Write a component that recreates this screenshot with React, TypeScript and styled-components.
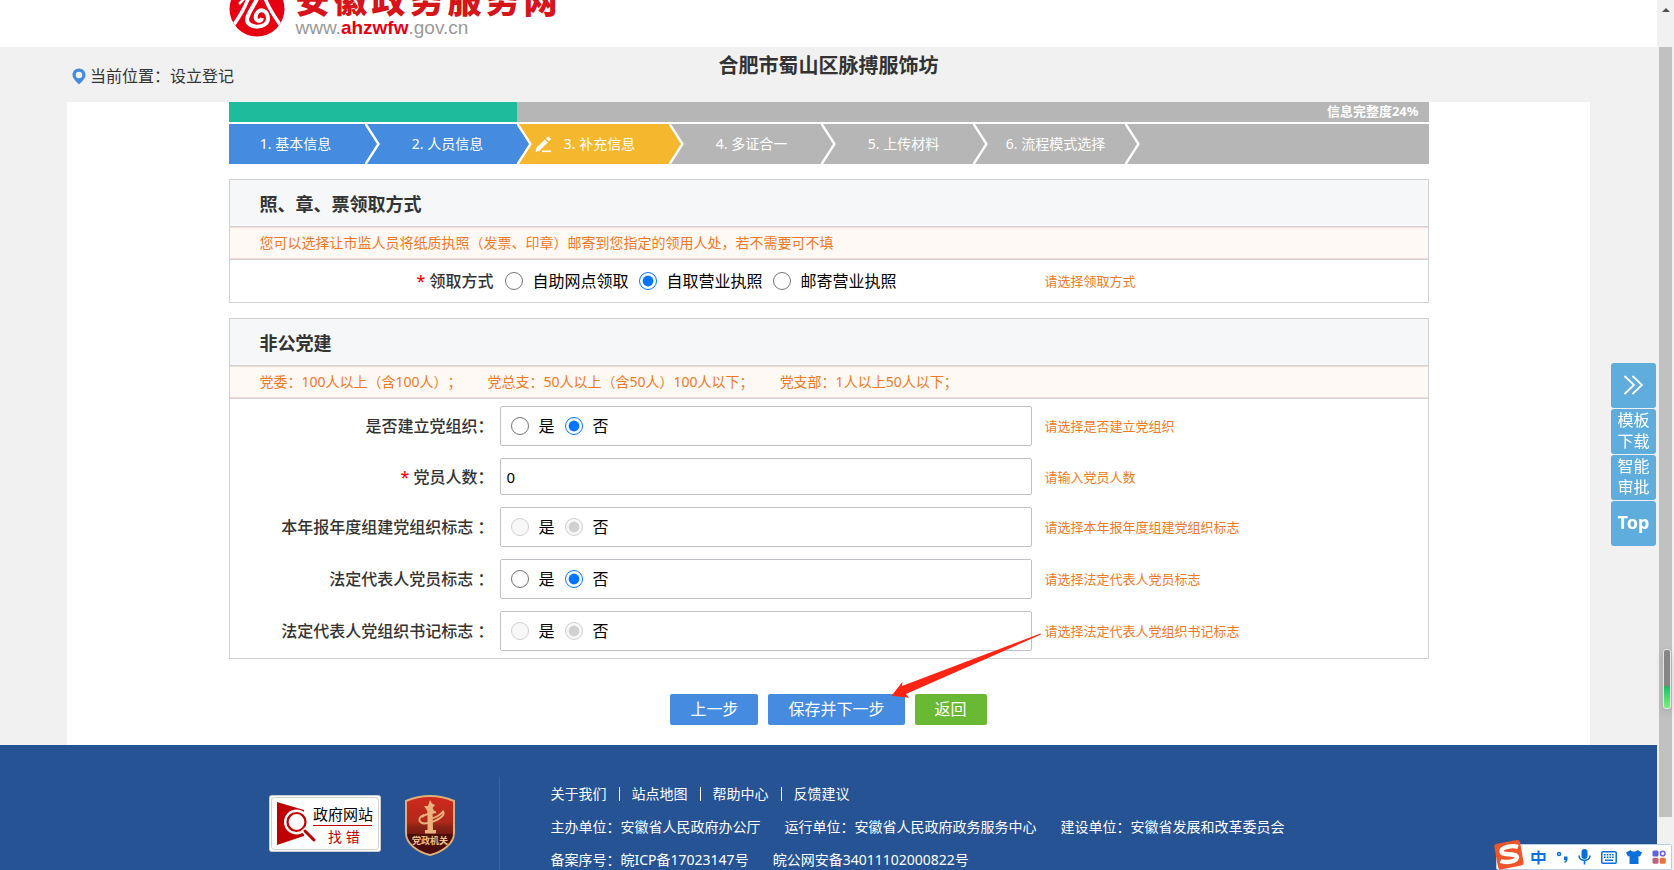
import React, { useState } from "react";
import styled, { createGlobalStyle } from "styled-components";

const GlobalStyle = createGlobalStyle`
  * { box-sizing: border-box; }
  html, body { margin: 0; padding: 0; }
  body {
    background: #f1f1f1;
    color: #333;
    font-family: "Noto Sans", "Noto Sans CJK SC", sans-serif;
    font-size: 14px;
    line-height: 20px;
    text-spacing-trim: space-all;
  }
  button, input { font-family: inherit; }
  a { color: inherit; text-decoration: none; }
  h1, h2, p { margin: 0; }
`;

const colors = {
  blue: "#458bdf",
  grey: "#b6b6b6",
  yellow: "#f5b72e",
  teal: "#1cbc9c",
  green: "#69b934",
  line: "#d0d1d2",
  orange: "#f17923",
  footer: "#265394",
};

const Viewport = styled.div`
  display: flex;
  height: 100vh;
  overflow: hidden;
`;

const Page = styled.div`
  flex: 1;
  min-width: 0;
  display: flex;
  flex-direction: column;
`;

/* ---------- header ---------- */

const Header = styled.header`
  flex: none;
  height: 47px;
  background: #fff;
  overflow: hidden;
  display: flex;
  justify-content: center;
`;

const HeaderInner = styled.div`
  width: 1200px;
  display: flex;
  align-items: flex-end;
  gap: 11px;
`;

const Emblem = styled.svg`
  flex: none;
  width: 56px;
  height: 56px;
  margin-bottom: 10px;
`;

const SiteNames = styled.div`
  display: flex;
  flex-direction: column;
  margin-bottom: 9px;
`;

const SiteName = styled.div`
  display: flex;
  gap: 4px;
  font-size: 34px;
  line-height: 36px;
  font-weight: 900;
  color: #d7141a;
`;

const SiteUrl = styled.div`
  font-family: "Liberation Sans", sans-serif;
  font-size: 19px;
  line-height: 20px;
  color: #999;
  strong { color: #e60012; }
`;

/* ---------- location bar ---------- */

const LocationBar = styled.div`
  flex: none;
  height: 55px;
  padding: 0 67px;
  display: grid;
  grid-template-columns: 1fr auto 1fr;
`;

const Crumb = styled.div`
  display: flex;
  align-items: center;
  gap: 4px;
  padding-left: 5px;
  font-size: 16px;
  line-height: 58px;
  svg { flex: none; }
`;

const Company = styled.h1`
  font-size: 20px;
  line-height: 37px;
  font-weight: 700;
`;

/* ---------- main panel ---------- */

const Panel = styled.main`
  flex: none;
  margin: 0 67px;
  background: #fff;
  display: flex;
  justify-content: center;
`;

const Content = styled.div`
  width: 1200px;
  display: flex;
  flex-direction: column;
`;

const Progress = styled.div`
  height: 20px;
  background: linear-gradient(to right, ${colors.teal} 24%, ${colors.grey} 24%);
  color: #fff;
  font-size: 13px;
  line-height: 18px;
  font-weight: 700;
  text-align: right;
  padding-right: 10px;
`;

const Steps = styled.ol`
  list-style: none;
  margin: 2px 0 15px;
  padding: 0;
  display: flex;
  height: 40px;
  background: ${colors.grey};
  color: #fff;
`;

const StepItem = styled.li`
  width: 152px;
  display: flex;
`;

const StepBody = styled.span<{ $fill: string }>`
  flex: 1;
  display: grid;
  grid-template-columns: 1fr auto 1fr;
  align-items: center;
  padding-right: 2px;
  background: ${(p) => p.$fill};
`;

const StepIcon = styled.span`
  display: flex;
  padding-left: 2px;
`;

const Section = styled.section`
  border: 1px solid ${colors.line};
  margin-bottom: 15px;
`;

const SectionTitle = styled.h2`
  height: 47px;
  padding-left: 30px;
  background: #f5f7f9;
  border-bottom: 1px solid ${colors.line};
  font-size: 18px;
  line-height: 48px;
  font-weight: 700;
`;

const Notice = styled.p`
  display: flex;
  gap: 26px;
  height: 32px;
  padding-left: 30px;
  background: #fff9f6;
  border: 1px solid #fbdbd5;
  border-width: 1px 0;
  line-height: 29px;
  color: ${colors.orange};
`;

const Rows = styled.div<{ $pad: number }>`
  border-top: 1px solid ${colors.line};
  padding: ${(p) => p.$pad}px 0;
  display: flex;
  flex-direction: column;
  gap: 12px;
`;

const Row = styled.div`
  display: grid;
  grid-template-columns: 264px 532px 1fr;
  align-items: center;
  min-height: 37px;
  column-gap: 6px;
`;

const FieldLabel = styled.label`
  text-align: right;
  font-size: 16px;
  line-height: 24px;
  font-weight: 500;
  white-space: pre;
`;

const Required = styled.span`
  color: #f00;
`;

const Hint = styled.span`
  padding-left: 7px;
  font-size: 13px;
  color: ${colors.orange};
`;

const RadioBox = styled.div<{ $boxed: boolean }>`
  display: flex;
  align-items: center;
  gap: 10px;
  height: ${(p) => (p.$boxed ? 40 : 42)}px;
  padding-left: ${(p) => (p.$boxed ? 10 : 5)}px;
  border: ${(p) => (p.$boxed ? "1px solid #bfc3c8" : "0")};
  border-radius: 2px;
`;

const RadioLabel = styled.label`
  display: flex;
  align-items: center;
  gap: 10px;
  font-size: 16px;
  line-height: 24px;
  color: #000;
`;

const Radio = styled.input`
  width: 18px;
  height: 18px;
  margin: 0;
`;

const TextInput = styled.input`
  width: 100%;
  height: 37px;
  padding: 0 6px;
  border: 1px solid #bfc3c8;
  border-radius: 2px;
  font-size: 15px;
  color: #000;
  background: #fff;
`;

const Actions = styled.div`
  display: flex;
  justify-content: center;
  gap: 10px;
  padding: 20px 0;
`;

const ActionButton = styled.button<{ $fill: string }>`
  height: 31px;
  padding: 0 20px;
  border: 0;
  border-radius: 2px;
  background: ${(p) => p.$fill};
  color: #fff;
  font-size: 16px;
  line-height: 31px;
`;

const ArrowAnchor = styled.div`
  position: relative;
`;

const Arrow = styled.svg`
  position: absolute;
  left: 123px;
  bottom: 26px;
  width: 150px;
  height: 66px;
  pointer-events: none;
`;

/* ---------- footer ---------- */

const Footer = styled.footer`
  flex: 1 0 auto;
  padding-top: 32px;
  background: ${colors.footer};
  color: #fff;
  display: flex;
  justify-content: center;
`;

const FooterInner = styled.div`
  width: 1200px;
  display: flex;
`;

const Badges = styled.div`
  width: 271px;
  padding: 18px 0 0 40px;
  display: flex;
  align-items: flex-start;
  gap: 24px;
  border-right: 1px solid #3a649f;
`;

const FooterText = styled.div`
  padding-left: 51px;
`;

const FooterLine = styled.div<{ $gap: number }>`
  display: flex;
  align-items: center;
  gap: ${(p) => p.$gap}px;
  line-height: 33px;
`;

const Divider = styled.i`
  width: 1px;
  height: 14px;
  background: #fff;
`;

/* ---------- overlays ---------- */

const Scrollbar = styled.div`
  flex: none;
  width: 17px;
  padding: 8px 2px 53px;
  background: #f1f1f1;
  display: flex;
  flex-direction: column;
  align-items: center;
  gap: 35px;
`;

const ScrollArrow = styled.i`
  border: 4px solid transparent;
  border-top: 0;
  border-bottom: 4px solid #505050;
`;

const ScrollThumb = styled.div`
  flex: 1;
  width: 100%;
  background: #c1c1c1;
`;

const Meter = styled.div`
  position: fixed;
  right: 3px;
  top: 649px;
  width: 8px;
  height: 60px;
  border: 1px solid #e4e4e4;
  border-radius: 3px;
  background: linear-gradient(#858585 62%, #22b45c 62%, #2ccb6c 70%, #7df07a);
  box-shadow: 0 3px 8px rgba(0, 0, 0, 0.15);
`;

const SideTools = styled.nav`
  position: fixed;
  right: 18px;
  top: 363px;
  display: flex;
  flex-direction: column;
  gap: 1px;
`;

const SideButton = styled.button<{ $strong?: boolean }>`
  width: 45px;
  height: 45px;
  padding: 0 6px 2px;
  border: 0;
  border-radius: 3px;
  background: #5eaddd;
  color: #fff;
  font-size: ${(p) => (p.$strong ? 18 : 16)}px;
  font-weight: ${(p) => (p.$strong ? 700 : 400)};
  line-height: 21px;
  display: flex;
  align-items: center;
  justify-content: center;
`;

const ImeBar = styled.div`
  position: fixed;
  right: 2px;
  bottom: 0;
  height: 26px;
  width: 176px;
  padding: 0 5px 0 34px;
  display: flex;
  align-items: center;
  justify-content: space-between;
  background: #fff;
  border: 1px solid #b7cdea;
  border-radius: 2px;
`;

const ImeLogo = styled.svg`
  position: absolute;
  left: -4px;
  bottom: -1px;
`;

/* ---------- data ---------- */

const steps = [
  { text: "1. 基本信息", fill: colors.blue },
  { text: "2. 人员信息", fill: colors.blue },
  { text: "3. 补充信息", fill: colors.yellow, current: true },
  { text: "4. 多证合一", fill: colors.grey },
  { text: "5. 上传材料", fill: colors.grey },
  { text: "6. 流程模式选择", fill: colors.grey },
];

function Chevron({ from, to }: { from: string; to: string }) {
  return (
    <svg width="16" height="40" viewBox="0 0 16 40">
      <rect width="16" height="40" fill={to} />
      <path d="M0 0L13 20L0 40Z" fill={from} />
      <path d="M0 -1L13.5 20L0 41" fill="none" stroke="#fff" strokeWidth="2.4" />
    </svg>
  );
}

interface RadioFieldProps {
  name: string;
  label: string;
  hint: string;
  options: string[];
  initial: number;
  boxed?: boolean;
  required?: boolean;
  disabled?: boolean;
}

function RadioField({ name, label, hint, options, initial, boxed = true, required, disabled }: RadioFieldProps) {
  const [value, setValue] = useState(initial);
  return (
    <Row>
      <FieldLabel as="span" id={`${name}-label`}>
        {required && <Required>* </Required>}
        {label}
      </FieldLabel>
      <RadioBox $boxed={boxed} role="radiogroup" aria-labelledby={`${name}-label`}>
        {options.map((o, i) => (
          <RadioLabel key={o}>
            <Radio type="radio" name={name} checked={value === i} disabled={disabled} onChange={() => setValue(i)} />
            {o}
          </RadioLabel>
        ))}
      </RadioBox>
      <Hint>{hint}</Hint>
    </Row>
  );
}

function FindErrorBadge() {
  return (
    <svg width="112" height="57" viewBox="0 0 112 57">
      <rect x="0.5" y="0.5" width="111" height="56" rx="2" fill="#fff" stroke="#c9cdd3" />
      <rect x="2.5" y="2.5" width="107" height="52" rx="3" fill="#fff" stroke="#cfcfcf" />
      <path d="M8 7L35 15V41L8 50Z" fill="#c00000" />
      <circle cx="27.500" cy="27" r="12.500" fill="#fff" />
      <circle cx="27.500" cy="27" r="9" fill="#fff" stroke="#c00000" strokeWidth="2.200" />
      <path d="M34 34L46 47" stroke="#fff" strokeWidth="6" />
      <path d="M36 36L45 45" stroke="#c00000" strokeWidth="3" strokeLinecap="round" />
      <text x="44" y="25" fontSize="15" fill="#000">政府网站</text>
      <path d="M44 30.500H103" stroke="#c00000" />
      <text x="59" y="47" fontSize="14" fill="#c00000">找 错</text>
    </svg>
  );
}

function PartyBadge() {
  return (
    <svg width="50" height="61" viewBox="0 0 50 61">
      <defs>
        <linearGradient id="shield" x1="0" y1="0" x2="0" y2="1">
          <stop offset="0" stopColor="#cf2a1c" />
          <stop offset="0.45" stopColor="#b0281b" />
          <stop offset="0.5" stopColor="#8f2417" />
          <stop offset="0.7" stopColor="#6d170f" />
          <stop offset="1" stopColor="#3f0b08" />
        </linearGradient>
      </defs>
      <path d="M25 1C33 1 42 3 49 6V38C49 49 37 57 25 60C13 57 1 49 1 38V6C8 3 17 1 25 1Z" fill="url(#shield)" stroke="#dfae78" strokeWidth="2" />
      <path d="M2.500 39V41C5 50 15 56 25 58.500C35 56 45 50 47.500 41V39Z" fill="#4a0d09" />
      <path d="M22.500 14H27.500L28 35H31V38.500H20V35H22.500Z" fill="#eab27d" />
      <path d="M25 5L27 8.500L30 10L27.500 13L30 17L23 17L19 11L23 11Z" fill="#eab27d" />
      <path d="M19 20C11 23 14 30 23 28C33 26 41 20 38 16.500C36 19 33 22 26 23.500M17 22C20 19 27 18 31 17" fill="none" stroke="#eab27d" strokeWidth="2" />
      <text x="25" y="49" textAnchor="middle" fontSize="9" fontWeight="700" fill="#f0c08a">党政机关</text>
    </svg>
  );
}

export default function App() {
  const [members, setMembers] = useState("0");
  return (
    <>
      <GlobalStyle />
      <Viewport>
        <Page>
          <Header>
            <HeaderInner>
              <Emblem viewBox="0 0 56 56">
                <defs>
                  <clipPath id="disc">
                    <circle cx="28" cy="28" r="27.500" />
                  </clipPath>
                </defs>
                <g clipPath="url(#disc)">
                  <rect width="56" height="56" fill="#e60012" />
                  <path d="M21 12C17 26 10 36 2 48" fill="none" stroke="#fff" strokeWidth="3.500" />
                  <path d="M35 14C39 28 47 37 54 48" fill="none" stroke="#fff" strokeWidth="3.500" />
                  <path d="M10 23L16 17L20 20" fill="none" stroke="#fff" strokeWidth="2.500" />
                  <path d="M29 16C24 27 18 33 18 39C19 48 38 48 39 38C39 29 30 26 27 34C25 40 32 42 33 37" fill="none" stroke="#fff" strokeWidth="4" />
                </g>
              </Emblem>
              <SiteNames>
                <SiteName>
                  {Array.from("安徽政务服务网").map((c, i) => (
                    <span key={i}>{c}</span>
                  ))}
                </SiteName>
                <SiteUrl>
                  www.<strong>ahzwfw</strong>.gov.cn
                </SiteUrl>
              </SiteNames>
            </HeaderInner>
          </Header>

          <LocationBar>
            <Crumb>
              <svg width="14" height="17" viewBox="0 0 14 17">
                <path fillRule="evenodd" d="M7 0.500C3.300 0.500 0.500 3.300 0.500 6.900C0.500 10.500 4 13 7 16.500C10 13 13.500 10.500 13.500 6.900C13.500 3.300 10.700 0.500 7 0.500ZM7 3.800A3.200 3.200 0 1 1 7 10.200A3.200 3.200 0 1 1 7 3.800Z" fill={colors.blue} />
              </svg>
              当前位置：设立登记
            </Crumb>
            <Company>合肥市蜀山区脉搏服饰坊</Company>
          </LocationBar>

          <Panel>
            <Content>
              <Progress>信息完整度24%</Progress>
              <Steps>
                {steps.map((s, i) => (
                  <StepItem key={s.text} aria-current={s.current ? "step" : undefined}>
                    <StepBody $fill={s.fill}>
                      <StepIcon>
                        {s.current && (
                          <svg width="17" height="17" viewBox="0 0 17 17" fill="#fff">
                            <path d="M0.500 16L1.500 11.800L9.800 3.500L12.800 6.500L4.500 14.800Z" />
                            <path d="M11 2.300L12.600 0.700Q13.200 0.200 13.800 0.700L15.500 2.400Q16 3 15.500 3.600L13.900 5.300Z" />
                            <rect x="7" y="14.500" width="9" height="1.600" />
                          </svg>
                        )}
                      </StepIcon>
                      {s.text}
                    </StepBody>
                    <Chevron from={s.fill} to={steps[i + 1]?.fill ?? colors.grey} />
                  </StepItem>
                ))}
              </Steps>

              <Section>
                <SectionTitle>照、章、票领取方式</SectionTitle>
                <Notice>您可以选择让市监人员将纸质执照（发票、印章）邮寄到您指定的领用人处，若不需要可不填</Notice>
                <Rows $pad={0}>
                  <RadioField
                    name="pickup"
                    label="领取方式"
                    hint="请选择领取方式"
                    options={["自助网点领取", "自取营业执照", "邮寄营业执照"]}
                    initial={1}
                    boxed={false}
                    required
                  />
                </Rows>
              </Section>

              <Section>
                <SectionTitle>非公党建</SectionTitle>
                <Notice>
                  <span>党委：100人以上（含100人）；</span>
                  <span>党总支：50人以上（含50人）100人以下；</span>
                  <span>党支部：1人以上50人以下；</span>
                </Notice>
                <Rows $pad={7}>
                  <RadioField name="org" label="是否建立党组织：" hint="请选择是否建立党组织" options={["是", "否"]} initial={1} />
                  <Row>
                    <FieldLabel htmlFor="members">
                      <Required>* </Required>党员人数：
                    </FieldLabel>
                    <TextInput id="members" type="text" value={members} onChange={(e) => setMembers(e.target.value)} />
                    <Hint>请输入党员人数</Hint>
                  </Row>
                  <RadioField name="year" label="本年报年度组建党组织标志 ：" hint="请选择本年报年度组建党组织标志" options={["是", "否"]} initial={1} disabled />
                  <RadioField name="legal" label="法定代表人党员标志 ：" hint="请选择法定代表人党员标志" options={["是", "否"]} initial={1} />
                  <RadioField name="secretary" label="法定代表人党组织书记标志 ：" hint="请选择法定代表人党组织书记标志" options={["是", "否"]} initial={1} disabled />
                </Rows>
              </Section>

              <Actions>
                <ActionButton type="button" $fill={colors.blue}>上一步</ActionButton>
                <ArrowAnchor>
                  <ActionButton type="button" $fill={colors.blue}>保存并下一步</ActionButton>
                  <Arrow viewBox="0 0 150 66">
                    <path d="M0.500 62.700L11.500 48.700L11 53L149.500 0.500L150 1.500L15 61L18 64.700Z" fill="#ff2413" />
                  </Arrow>
                </ArrowAnchor>
                <ActionButton type="button" $fill={colors.green}>返回</ActionButton>
              </Actions>
            </Content>
          </Panel>

          <Footer>
            <FooterInner>
              <Badges>
                <FindErrorBadge />
                <PartyBadge />
              </Badges>
              <FooterText>
                <FooterLine $gap={12}>
                  <a href="#about">关于我们</a>
                  <Divider />
                  <a href="#map">站点地图</a>
                  <Divider />
                  <a href="#help">帮助中心</a>
                  <Divider />
                  <a href="#feedback">反馈建议</a>
                </FooterLine>
                <FooterLine $gap={24}>
                  <span>主办单位：安徽省人民政府办公厅</span>
                  <span>运行单位：安徽省人民政府政务服务中心</span>
                  <span>建设单位：安徽省发展和改革委员会</span>
                </FooterLine>
                <FooterLine $gap={24}>
                  <span>备案序号：皖ICP备17023147号</span>
                  <span>皖公网安备34011102000822号</span>
                </FooterLine>
              </FooterText>
            </FooterInner>
          </Footer>
        </Page>

        <Scrollbar>
          <ScrollArrow />
          <ScrollThumb />
        </Scrollbar>
      </Viewport>

      <Meter />

      <SideTools>
        <SideButton type="button" aria-label="收起">
          <svg width="21" height="20" viewBox="0 0 21 20" fill="none" stroke="#fff" strokeWidth="1.800">
            <path d="M1.500 1L11 10L1.500 19M9.500 1L19 10L9.500 19" />
          </svg>
        </SideButton>
        <SideButton type="button">模板下载</SideButton>
        <SideButton type="button">智能审批</SideButton>
        <SideButton type="button" $strong>Top</SideButton>
      </SideTools>

      <ImeBar>
        <ImeLogo width="32" height="31" viewBox="0 0 32 31">
          <path d="M3 5Q1 5.500 1.400 8L5 28Q5.500 31 8 30.500L28 26.500Q31 26 30.500 23L27 3Q26.500 0.500 24 1Z" fill="#f0562a" />
          <path d="M25 8C19 6 8 8 8.500 12.500C9 17 23 13.500 24 18C24 23 13 24 7.500 22" fill="none" stroke="#fff" strokeWidth="4.400" />
        </ImeLogo>
        <svg width="15" height="15" viewBox="0 0 15 15" fill="none" stroke="#0a70dc" strokeWidth="2">
          <path d="M1.500 4H13.500V10H1.500ZM7.500 0.500V14.500" />
        </svg>
        <svg width="13" height="14" viewBox="0 0 13 14">
          <circle cx="3" cy="4" r="1.500" fill="none" stroke="#0a70dc" strokeWidth="1.500" />
          <path d="M8 6.500H11.500V9C11.500 11 10.500 12.500 8.500 13V11.500C9.300 11 9.500 10.500 9.500 10H8Z" fill="#0a70dc" />
        </svg>
        <svg width="13" height="16" viewBox="0 0 13 16">
          <rect x="3.500" y="0" width="6" height="10" rx="3" fill="#0a70dc" />
          <path d="M1 6.500C1 13 12 13 12 6.500M6.500 11.500V15.500" fill="none" stroke="#0a70dc" strokeWidth="1.600" />
        </svg>
        <svg width="16" height="13" viewBox="0 0 16 13">
          <rect x="0.800" y="0.800" width="14.400" height="11.400" rx="1" fill="#fff" stroke="#0a70dc" strokeWidth="1.500" />
          <path d="M3 3.800H13M3 6.300H13" stroke="#0a70dc" strokeWidth="1.500" strokeDasharray="1.700 1" />
          <path d="M4 9.200H12" stroke="#0a70dc" strokeWidth="1.500" />
        </svg>
        <svg width="16" height="14" viewBox="0 0 16 14">
          <path d="M4.500 0C5.500 2 10.500 2 11.500 0L16 2.500L14 6.500L12.500 6V14H3.500V6L2 6.500L0 2.500Z" fill="#0a70dc" />
        </svg>
        <svg width="14" height="14" viewBox="0 0 14 14">
          <rect x="0.500" y="0.500" width="6" height="6" rx="1.500" fill="#5a63e8" />
          <circle cx="10.700" cy="3.500" r="2.300" fill="none" stroke="#6f62e0" strokeWidth="1.600" />
          <rect x="0.500" y="7.800" width="6" height="6" rx="1.500" fill="#c0627c" />
          <rect x="7.700" y="7.800" width="6" height="6" rx="1.500" fill="#e8703f" />
        </svg>
      </ImeBar>
    </>
  );
}
